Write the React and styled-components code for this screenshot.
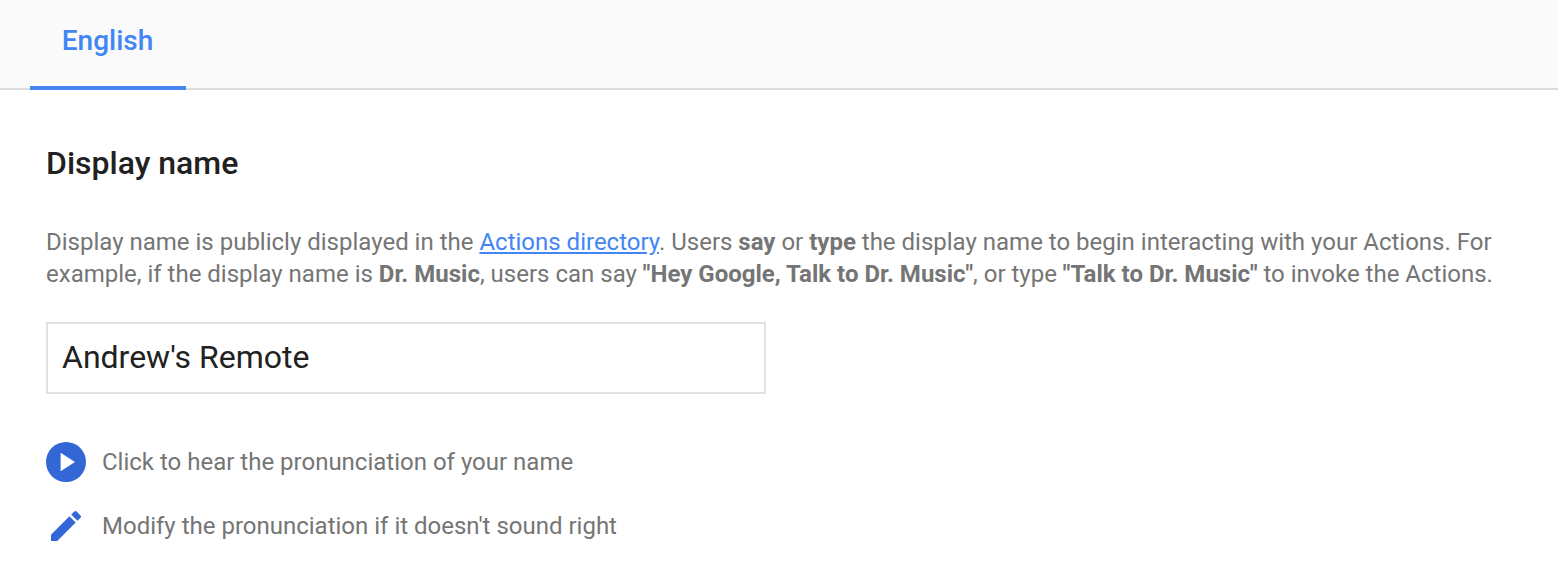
import React from 'react';
import styled, { createGlobalStyle } from 'styled-components';

const GlobalStyle = createGlobalStyle`
  * { box-sizing: border-box; }
  body { margin: 0; background: #fff; font-family: Roboto, sans-serif; }
`;

const Page = styled.div`
  width: 100%;
  height: 584px;
  overflow: hidden;
`;

const TabBar = styled.nav`
  display: flex;
  height: 90px;
  padding-left: 30px;
  background: #fafafa;
  border-bottom: 2px solid #dcdcdc;
`;

const Tab = styled.button`
  width: 156px;
  height: 90px;
  padding: 0 1px 4px 0;
  border: 0;
  border-bottom: 4px solid #4285f4;
  background: transparent;
  color: #4285f4;
  font: 500 28px/32px Roboto, sans-serif;
`;

const Content = styled.main`
  padding: 53px 46px 0;
`;

const Title = styled.h1`
  margin: 0;
  color: #212121;
  font-size: 32px;
  font-weight: 500;
  line-height: 40px;
`;

const Description = styled.p`
  margin: 43px 0 0;
  color: #757575;
  font-size: 24px;
  line-height: 32px;
  white-space: nowrap;
`;

const Link = styled.a`
  color: #4285f4;
  text-decoration: underline;
`;

const NameInput = styled.input`
  display: block;
  width: 720px;
  height: 72px;
  margin: 32px 0 0;
  padding: 0 14px 2px;
  border: 2px solid #e0e0e0;
  background: #fff;
  color: #212121;
  font: 400 32px Roboto, sans-serif;
  outline: 0;
`;

const ActionList = styled.div`
  display: flex;
  flex-direction: column;
  gap: 24px;
  margin-top: 48px;
`;

const Action = styled.div`
  display: flex;
  align-items: center;
  gap: 16px;
  height: 40px;
  color: #757575;
  font-size: 24px;
  line-height: 32px;
`;

const Icon = styled.svg`
  width: 40px;
  height: 40px;
  fill: #3367d6;
`;

export default function App() {
  return (
    <Page>
      <GlobalStyle />
      <TabBar>
        <Tab>English</Tab>
      </TabBar>
      <Content>
        <Title>Display name</Title>
        <Description>
          Display name is publicly displayed in the <Link href="#">Actions directory</Link>. Users <b>say</b> or{' '}
          <b>type</b> the display name to begin interacting with your Actions. For
          <br />
          example, if the display name is <b>Dr. Music</b>, users can say <b>"Hey Google, Talk to Dr. Music"</b>, or
          type <b>"Talk to Dr. Music"</b> to invoke the Actions.
        </Description>
        <NameInput defaultValue="Andrew's Remote" spellCheck={false} />
        <ActionList>
          <Action>
            <Icon viewBox="0 0 40 40">
              <circle cx="20" cy="20" r="20" />
              <path d="M14.6 10.8v18.4L29 20z" fill="#fff" />
            </Icon>
            <span>Click to hear the pronunciation of your name</span>
          </Action>
          <Action>
            <Icon viewBox="0 0 24 24">
              <path d="M3 17.25V21h3.75L17.81 9.94l-3.75-3.75L3 17.25zM20.71 7.04a1 1 0 0 0 0-1.41l-2.34-2.34a1 1 0 0 0-1.41 0l-1.83 1.83 3.75 3.75 1.83-1.83z" />
            </Icon>
            <span>Modify the pronunciation if it doesn't sound right</span>
          </Action>
        </ActionList>
      </Content>
    </Page>
  );
}
